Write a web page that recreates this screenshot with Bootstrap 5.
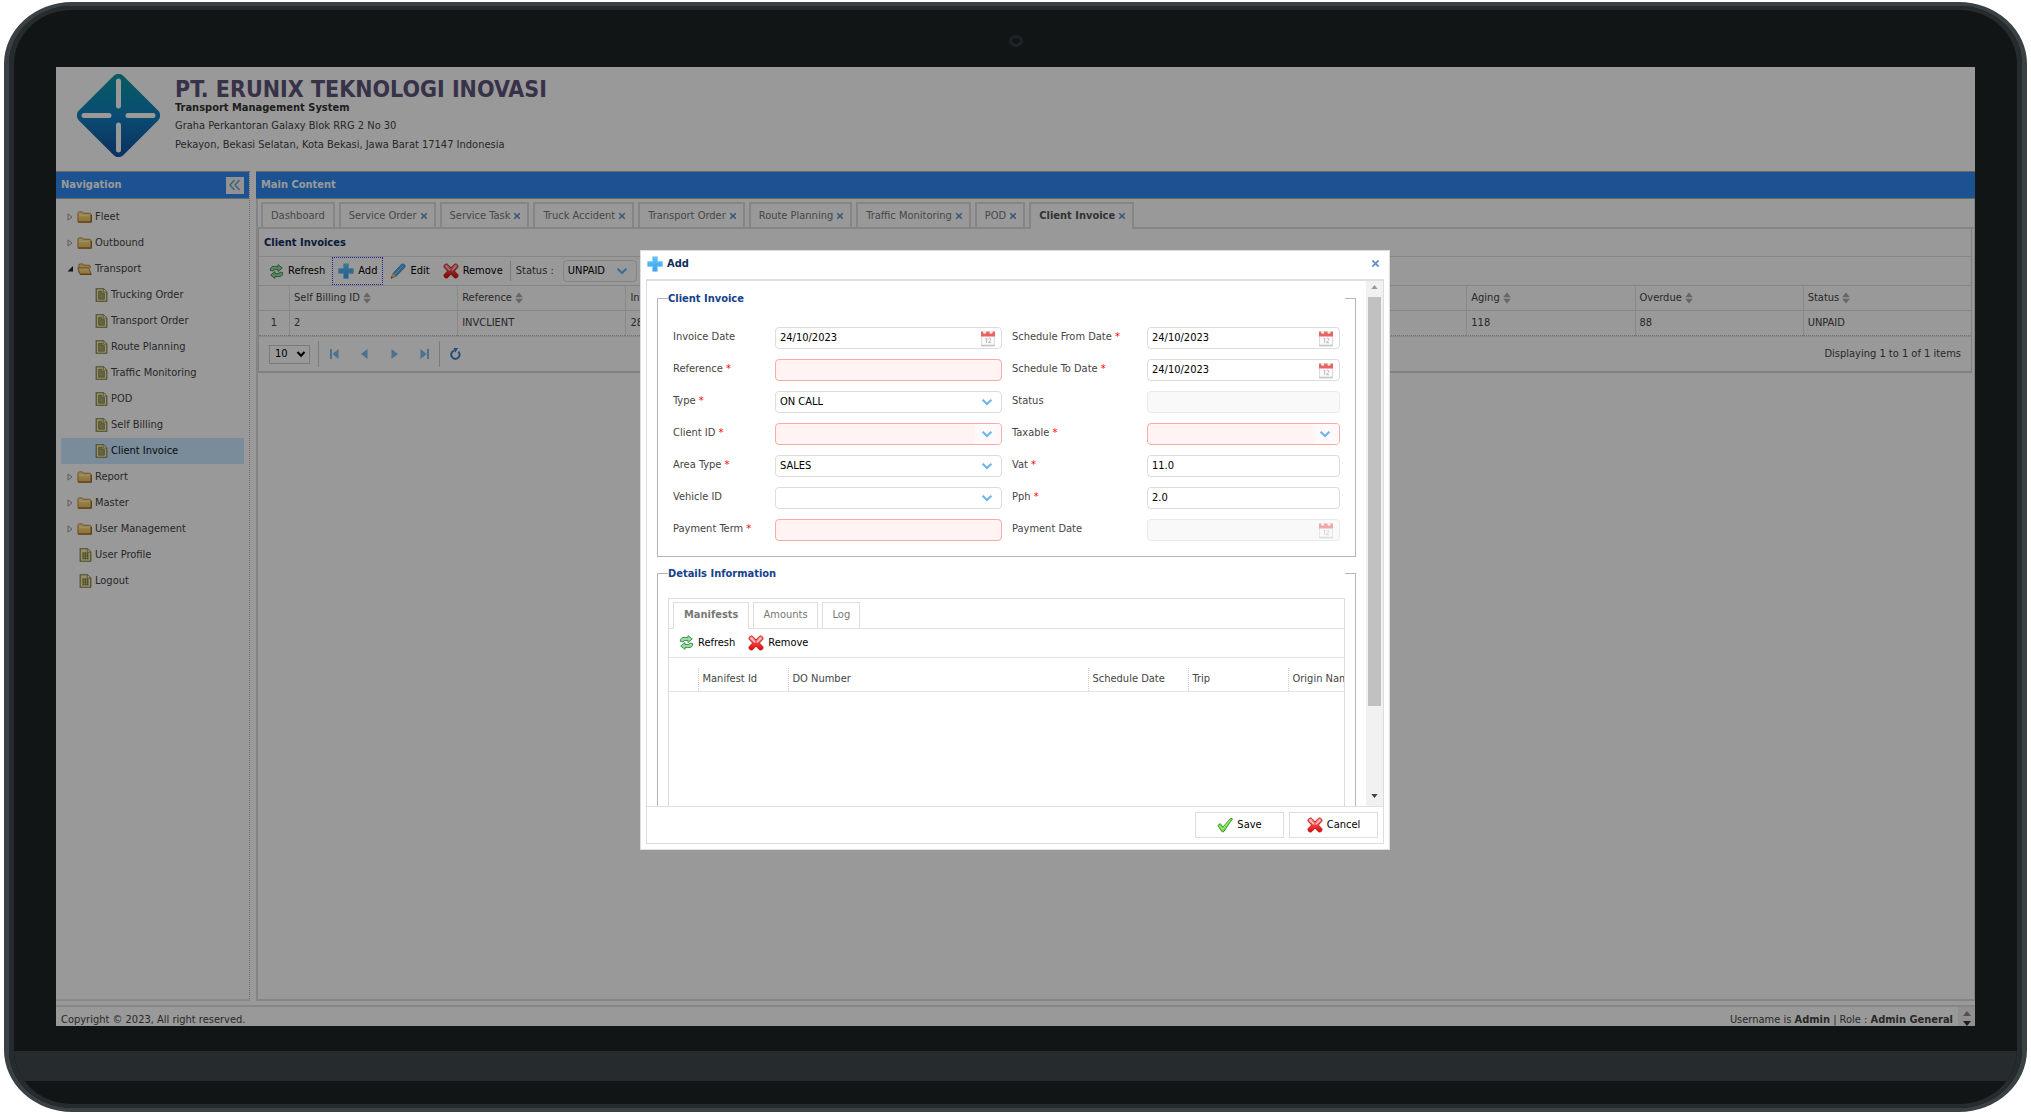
<!DOCTYPE html>
<html lang="en">
<head>
<meta charset="utf-8">
<meta name="viewport" content="width=device-width, initial-scale=1">
<title>Transport Management System</title>
<link href="https://cdn.jsdelivr.net/npm/bootstrap@5.3.0/dist/css/bootstrap.min.css" rel="stylesheet">
<style>
:root{--line:#dcdcdc;--edge:#d8d8d8;--brand:#2f89f0;--ink:#444}
body{background:#fff;min-height:100vh;font-family:"DejaVu Sans Condensed","DejaVu Sans",sans-serif;font-size:11px;line-height:16px;color:var(--ink)}
button,input,select{font:inherit;color:inherit}
svg{display:block;flex:none}
a{color:inherit;text-decoration:none}
/* monitor frame */
.stage{min-height:100vh;padding:2px 4px 6px}
.monitor{background:#111516;border:4px solid #3a4145;border-width:4px 5px;border-radius:68px/62px}
.bezel{border:4px solid #262b2e;border-width:4px 5px;border-radius:63px/58px;overflow:hidden}
.camera-bar{height:57px;padding-top:5px}
.camera{width:14px;height:12px;border:3px solid #1f2426;border-radius:50%}
.chin-gap{height:25px}
.chin{height:30px;background:#262b2e}
.foot-gap{height:23px}
.display{margin:0 42px;background:#fff;overflow:hidden}
/* page header */
.brand-bar{height:104px;padding:7px 21px}
.brand-text{padding:3px 0 0 15px}
.brand-name{font-size:23px;line-height:24px;font-weight:700;color:#5c5478;margin:0}
.brand-sub{font-weight:700;line-height:14px;color:#333;margin-bottom:1px}
.brand-line{line-height:19px;margin:0}
/* panels */
.bar-title{height:28px;background:var(--brand);border:1px solid #b0b0b0;border-width:1px 0;color:#fff;font-weight:700;padding:0 5px}
.side{width:194px;border-right:1px dotted #b8b8b8;border-bottom:2px solid #e4e4e4}
.collapse-btn{width:18px;height:17px;border:0;padding:0;background:#f4f4f4}
.tree{padding:5px}
.tree a{height:26px;gap:3px;color:var(--ink)}
.tree a.lv1{padding-left:6px}
.tree a.leaf1{padding-left:18px}
.tree a.lv2{padding-left:34px}
.tree a.picked{background:#cbe8ff;color:#111}
.content-col{padding-left:6px}
.main{border:2px solid #dcdcdc;border-width:0 1px 2px 2px}
.tab-row{gap:4px;padding:3px 3px 0;border-bottom:2px solid #dedede}
.tab-row .tab{height:25px;border:2px solid #dedede;border-bottom:0;background:#fff;color:#777;padding:0 6px 0 8px;gap:3px}
.tab-row .tab.plain{padding:0 8px}
.tab-row .tab.on{font-weight:700;color:#555;margin-bottom:-2px;height:27px;padding-bottom:2px}
.grid-panel{border:1px solid var(--edge);border-width:0 1px 2px 1px;margin-right:2px}
.panel-head{height:27px;padding:0 5px;font-weight:700;color:#0e2d5f}
.tools{height:29px;border-top:1px solid #e0e0e0;gap:1px}
.tool{border:1px dotted transparent;background:none;padding:0 5px;gap:4px;height:28px;color:#000}
.tool.focus{border-color:#4040ff}
.status-box{width:74px}
.rule{width:1px;background:#ccc;align-self:stretch}
.data{table-layout:fixed;width:100%;border-collapse:separate;border-spacing:0}
.data .num-col{width:30px}
.data th,.data td{height:25px;padding:0 4px;font-weight:400;border-left:1px solid #e4e4e4;white-space:nowrap;overflow:hidden}
.data th:first-child,.data td:first-child{border-left:0;text-align:center;padding:0}
.data thead th{height:26px;border-top:1px solid #dcdcdc;border-bottom:1px solid #dcdcdc}
.data tbody td{border-bottom:1px dotted #bbb}
.th-flex{gap:3px}
.pager{height:35px;border-top:1px solid #e4e4e4;padding:0 10px}
.pager .num{width:41px;height:19px;border:1px solid #ccc;background:#fff;padding:0 5px;color:#000;appearance:none}
.pager button{border:0;background:none;padding:0;width:30px}
.splitter{height:4px}
.page-foot{height:21px;border-top:2px solid #e0e0e0;line-height:12px}
.foot-text{padding:0 5px}
/* fields */
.field{position:relative;height:22px;border:1px solid #dcdcdc;border-radius:4px;background:#fff;overflow:hidden}
.field input,.field select{width:100%;height:20px;border:0;background:none;padding:0 4px;appearance:none;color:#000;outline:0;display:block}
.field svg{position:absolute;right:6px;top:2px;pointer-events:none}
.field.need{background:#fff3f3;border-color:#ffa8a8}
.field.need.drop::after{content:"";position:absolute;right:0;top:0;width:26px;height:20px;background:#fff9f9}
.field.need.drop svg{z-index:1}
.field.off{background:#f9f9f9;border-color:#eaeaea}
.field.off svg{opacity:.55}
/* dialog */
.mask{position:absolute;inset:0;background:rgba(0,0,0,.4);padding:6px 1px 0 0}
.dlg{width:750px;height:600px;background:#fff;border:1px solid #ddd;padding:0 5px 5px}
.dlg-head{height:28px;padding:0 4px 2px 1px;font-weight:700;color:#0e2d5f}
.dlg-body{border:1px solid #dcdcdc;border-top:2px solid #dedede;min-height:0}
.scroller{overflow:hidden;padding:9px 10px 0}
.group{border:1px solid #b3b3c6;padding:0 10px;margin:0 0 8px}
.group legend{float:none;width:100%;margin:0;padding:0;font-size:11px;line-height:17px;font-weight:700;color:#15428b}
.form-grid{display:grid;grid-template-columns:102px 227fr 145px 193fr;row-gap:10px;padding:20px 5px 15px}
.form-grid label{line-height:20px}
.form-grid label.second{padding-left:10px}
.form-grid i{font-style:normal;color:red}
.detail{border:1px solid #dcdcdc;margin-top:16px;height:300px;overflow:hidden}
.detail .tab-row{padding:3px 4px 0;border-bottom:1px solid #e0e0e0}
.detail .tab-row .tab{border-width:1px;height:26px;border-bottom:0;padding:0 9px 0 10px}
.detail .tab-row .tab.on{height:27px;margin-bottom:-1px;padding-bottom:1px;color:#777}
.detail .tools{border-top:0;border-bottom:1px solid #e4e4e4;padding-left:4px}
.lines{table-layout:fixed;width:767px}
.lines thead{border-bottom:1px solid #e4e4e4}
.lines th{height:24px;font-weight:400;padding:0 4px;border-left:1px dotted #ccc}
.lines th:first-child{border-left:0}
.lines .w-no{width:29px}
.lines .w-id{width:90px}
.lines .w-do{width:300px}
.lines .w-std{width:100px}
.lines-wrap{padding-top:10px}
.sbar{width:17px;background:#f1f1f1}
.sbar .grip{height:409px;width:13px;background:#c1c1c1}
.dlg-foot{height:37px;border-top:1px solid #e0e0e0;padding:0 5px;gap:5px}
.act{width:89px;height:26px;border:1px solid #ddd;background:#fff;color:#000;gap:4px;padding:0}
</style>
<script src="https://cdn.jsdelivr.net/npm/bootstrap@5.3.0/dist/js/bootstrap.bundle.min.js"></script>
</head>
<body>
<svg width="0" height="0" class="position-absolute">
<defs>
<linearGradient id="gLogo" x1="0" y1="0" x2="1" y2="1"><stop offset="0" stop-color="#0c9aa0"/><stop offset=".5" stop-color="#127fc0"/><stop offset="1" stop-color="#104f9c"/></linearGradient>
<linearGradient id="gFold" x1="0" y1="0" x2="0" y2="1"><stop offset="0" stop-color="#ffeaa0"/><stop offset="1" stop-color="#f0c050"/></linearGradient>
<linearGradient id="gPlus" x1="0" y1="0" x2="0" y2="1"><stop offset="0" stop-color="#5cc6fb"/><stop offset="1" stop-color="#3f9fe6"/></linearGradient>
<linearGradient id="gRed" x1="0" y1="0" x2="0" y2="1"><stop offset="0" stop-color="#ff9a9a"/><stop offset=".5" stop-color="#f04040"/><stop offset="1" stop-color="#e00808"/></linearGradient>
<symbol id="folder" viewBox="0 0 16 14"><path d="M1 3.2Q1 1.6 2.4 1.6H5.4Q6.4 1.6 6.800 3H13.4Q14.800 3 14.800 4.4V12H1Z" fill="url(#gFold)" stroke="#c08030"/><path d="M2.4 5.2H13.4" stroke="#fff3c4"/><path d="M1 12.6H15.4V4.6" fill="none" stroke="#8a5a20"/></symbol>
<symbol id="folder-open" viewBox="0 0 16 14"><path d="M2 11V2.800Q2 1.6 3.4 1.6H6Q7 1.6 7.4 3H13Q14 3 14 4V6" fill="#f7d47c" stroke="#c08030"/><path d="M.8 5.800H12.4L15.2 12.4H3.2Z" fill="url(#gFold)" stroke="#b97828"/><path d="M3 12.8H15.4" stroke="#8a5a20"/></symbol>
<symbol id="file" viewBox="0 0 13 15"><path d="M.8.8H8.600L12.2 4.2V14.2H.8Z" fill="#f8f3a0" stroke="#7d7a48" stroke-width="1.200"/><path d="M8.400.8V4.4H12.2" fill="#fffce0" stroke="#7d7a48" stroke-width=".8"/><path d="M3.4 3.6H7V6H9.6V12H3.4Z" fill="#aaa678" stroke="#77744c" stroke-width=".7"/></symbol>
<symbol id="sheet" viewBox="0 0 13 15"><path d="M.8.8H8.600L12.2 4.2V14.2H.8Z" fill="#f8f3a0" stroke="#7d7a48" stroke-width="1.200"/><path d="M8.400.8V4.4H12.2" fill="#fffce0" stroke="#7d7a48" stroke-width=".8"/><path d="M3.2 5.5H9.8M3.2 7.5H9.8M3.2 9.5H9.8M3.2 11.5H9.8M4 4.5V12M6.4 4.5V12M8.8 5V12" stroke="#77744c" stroke-width=".9"/></symbol>
<symbol id="tri" viewBox="0 0 7 8"><path d="M1 .9L5 4L1 7.1Z" fill="#fff" stroke="#999"/></symbol>
<symbol id="tri-open" viewBox="0 0 7 8"><path d="M6 1V6.500H.5Z" fill="#222"/></symbol>
<symbol id="refresh" viewBox="0 0 16 16"><g fill="#9adf9a" stroke="#3d8a52" stroke-width="1" stroke-linejoin="round"><path d="M1.400 6.800Q1.200 2 6.600 2.600H9.600V.7L14.200 4.200L9.600 8V5.800H6.400Q4.800 5.800 4.400 7.400Z"/><path d="M14.600 9.200Q14.800 14 9.400 13.400H6.400V15.300L1.800 11.800L6.400 8V10.200H9.600Q11.200 10.200 11.600 8.600Z"/></g></symbol>
<symbol id="plus" viewBox="0 0 16 16"><path d="M5.600.8H10.4V5.600H15.4V10.4H10.4V15.4H5.600V10.4H.6V5.600H5.600Z" fill="url(#gPlus)" stroke="#86cdf5" stroke-width=".8"/></symbol>
<symbol id="pencil" viewBox="0 0 16 16"><path d="M3.2 10.2L11.4 1.4Q13.4.2 14.8 2Q15.6 3.4 14.6 4.600L6.2 13.2Z" fill="#4aa8e8" stroke="#2f7fc0" stroke-width=".7"/><path d="M3.2 10.2L6.2 13.2L1 15.4Z" fill="#f6cf90" stroke="#a87840" stroke-width=".6"/><path d="M4.8 11.4L13 2.8" stroke="#a5dcff"/><path d="M1 15.4L1.6 13.6L2.8 14.6Z" fill="#444"/></symbol>
<symbol id="cross" viewBox="0 0 16 16"><path d="M3 1Q4.2.6 5.200 1.800L8 5L10.8 1.800Q12 .6 13.2 1Q15.6 2 15 4.200L11.4 8L15 11.8Q15.6 14.2 13.2 15Q12 15.4 10.8 14.2L8 11L5.200 14.2Q4.2 15.4 2.8 15Q.4 14.2 1 11.8L4.600 8L1 4.200Q.4 2 3 1Z" fill="url(#gRed)" stroke="#c01818" stroke-width=".9"/><path d="M3.2 3.2L6.8 7M12.8 3.2L9.2 7" stroke="#ffd0d0" stroke-width="1.300" stroke-linecap="round"/></symbol>
<symbol id="check" viewBox="0 0 16 16"><path d="M.8 8.400L3.4 6.600L5.800 10.2L13.4 1.400L15.6 1.800L6.400 15L4.800 14.6Z" fill="#6fe03c" stroke="#2f7d2a" stroke-width=".8" stroke-linejoin="round"/><path d="M2.4 8.600L5.600 12.4L13 3.400" fill="none" stroke="#b8f59a" stroke-width=".8"/></symbol>
<symbol id="cal" viewBox="0 0 14 16"><rect x=".4" y="2" width="13.200" height="13.600" fill="#fafafa" stroke="#d4d4d4" stroke-width=".8"/><rect y="1" width="14" height="5" fill="#e86464"/><circle cx="3.600" cy="1.800" r="1.500" fill="#eee"/><circle cx="10" cy="1.800" r="1.500" fill="#eee"/><path d="M4.4 8.400L5.600 7.600V12.4M7.400 8.400Q8.600 7 9.600 8.200Q10 9.400 7.400 12.200H10" fill="none" stroke="#b4b4b4" stroke-width=".9"/><path d="M.4 14.8H13.6" stroke="#bbb"/></symbol>
<symbol id="chev" viewBox="0 0 16 16"><path d="M3.600 5.800L8 10L12.4 5.800" fill="none" stroke="#6db6ee" stroke-width="2.200"/></symbol>
<symbol id="sort" viewBox="0 0 8 12"><path d="M4 .4L7.800 5.300H.2ZM4 11.600L7.800 6.700H.2Z" fill="#aaa"/></symbol>
<symbol id="x" viewBox="0 0 8 8"><path d="M1.200 1.200L6.800 6.800M6.800 1.200L1.200 6.800" stroke="#5f93c8" stroke-width="1.600"/></symbol>
<symbol id="up" viewBox="0 0 8 5"><path d="M0 5L4 0L8 5Z"/></symbol>
<symbol id="down" viewBox="0 0 8 5"><path d="M0 0L4 5L8 0Z"/></symbol>
</defs>
</svg>
<div class="stage d-flex flex-column">
<div class="monitor d-flex flex-column flex-grow-1">
<div class="bezel d-flex flex-column flex-grow-1">
<div class="camera-bar d-flex justify-content-center align-items-center"><span class="camera"></span></div>

<div class="display position-relative d-flex flex-column flex-grow-1">
<header class="brand-bar d-flex">
<svg width="83" height="83" viewBox="0 0 83 83"><rect x="10" y="10" width="63" height="63" rx="7" transform="rotate(45 41.500 41.500)" fill="url(#gLogo)"/><path d="M41.500 7V32M41.500 51V76M7 41.500H32M51 41.500H76" stroke="#fff" stroke-width="5" stroke-linecap="round"/></svg>
<div class="brand-text">
<h1 class="brand-name">PT. ERUNIX TEKNOLOGI INOVASI</h1>
<div class="brand-sub">Transport Management System</div>
<p class="brand-line">Graha Perkantoran Galaxy Blok RRG 2 No 30</p>
<p class="brand-line">Pekayon, Bekasi Selatan, Kota Bekasi, Jawa Barat 17147 Indonesia</p>
</div>
</header>

<div class="d-flex flex-grow-1">
<aside class="side flex-shrink-0">
<div class="bar-title d-flex align-items-center justify-content-between">Navigation
<button class="collapse-btn d-flex align-items-center justify-content-center" aria-label="Collapse"><svg width="12" height="12" viewBox="0 0 12 12"><path d="M5.500 1L1 6L5.500 11M10.500 1L6 6L10.500 11" fill="none" stroke="#5a9bd4" stroke-width="1.300"/></svg></button></div>
<nav class="tree">
<a href="#" class="lv1 d-flex align-items-center"><svg width="7" height="8"><use href="#tri"/></svg><svg width="15" height="14"><use href="#folder"/></svg>Fleet</a>
<a href="#" class="lv1 d-flex align-items-center"><svg width="7" height="8"><use href="#tri"/></svg><svg width="15" height="14"><use href="#folder"/></svg>Outbound</a>
<a href="#" class="lv1 d-flex align-items-center"><svg width="7" height="8"><use href="#tri-open"/></svg><svg width="15" height="14"><use href="#folder-open"/></svg>Transport</a>
<a href="#" class="lv2 d-flex align-items-center"><svg width="13" height="14"><use href="#file"/></svg>Trucking Order</a>
<a href="#" class="lv2 d-flex align-items-center"><svg width="13" height="14"><use href="#file"/></svg>Transport Order</a>
<a href="#" class="lv2 d-flex align-items-center"><svg width="13" height="14"><use href="#file"/></svg>Route Planning</a>
<a href="#" class="lv2 d-flex align-items-center"><svg width="13" height="14"><use href="#file"/></svg>Traffic Monitoring</a>
<a href="#" class="lv2 d-flex align-items-center"><svg width="13" height="14"><use href="#file"/></svg>POD</a>
<a href="#" class="lv2 d-flex align-items-center"><svg width="13" height="14"><use href="#file"/></svg>Self Billing</a>
<a href="#" class="lv2 picked d-flex align-items-center"><svg width="13" height="14"><use href="#file"/></svg>Client Invoice</a>
<a href="#" class="lv1 d-flex align-items-center"><svg width="7" height="8"><use href="#tri"/></svg><svg width="15" height="14"><use href="#folder"/></svg>Report</a>
<a href="#" class="lv1 d-flex align-items-center"><svg width="7" height="8"><use href="#tri"/></svg><svg width="15" height="14"><use href="#folder"/></svg>Master</a>
<a href="#" class="lv1 d-flex align-items-center"><svg width="7" height="8"><use href="#tri"/></svg><svg width="15" height="14"><use href="#folder"/></svg>User Management</a>
<a href="#" class="leaf1 d-flex align-items-center"><svg width="13" height="14"><use href="#sheet"/></svg>User Profile</a>
<a href="#" class="leaf1 d-flex align-items-center"><svg width="13" height="14"><use href="#sheet"/></svg>Logout</a>
</nav>
</aside>

<section class="content-col flex-grow-1 d-flex flex-column">
<div class="bar-title d-flex align-items-center">Main Content</div>
<div class="main flex-grow-1">
<div class="tab-row d-flex">
<button class="tab plain">Dashboard</button>
<button class="tab d-flex align-items-center">Service Order<svg width="8" height="8"><use href="#x"/></svg></button>
<button class="tab d-flex align-items-center">Service Task<svg width="8" height="8"><use href="#x"/></svg></button>
<button class="tab d-flex align-items-center">Truck Accident<svg width="8" height="8"><use href="#x"/></svg></button>
<button class="tab d-flex align-items-center">Transport Order<svg width="8" height="8"><use href="#x"/></svg></button>
<button class="tab d-flex align-items-center">Route Planning<svg width="8" height="8"><use href="#x"/></svg></button>
<button class="tab d-flex align-items-center">Traffic Monitoring<svg width="8" height="8"><use href="#x"/></svg></button>
<button class="tab d-flex align-items-center">POD<svg width="8" height="8"><use href="#x"/></svg></button>
<button class="tab on d-flex align-items-center">Client Invoice<svg width="8" height="8"><use href="#x"/></svg></button>
</div>
<div class="grid-panel">
<div class="panel-head d-flex align-items-center">Client Invoices</div>
<div class="tools d-flex align-items-center ps-1">
<button class="tool d-flex align-items-center"><svg width="15" height="15"><use href="#refresh"/></svg>Refresh</button>
<button class="tool focus d-flex align-items-center"><svg width="16" height="16"><use href="#plus"/></svg>Add</button>
<button class="tool d-flex align-items-center"><svg width="16" height="16"><use href="#pencil"/></svg>Edit</button>
<button class="tool d-flex align-items-center"><svg width="16" height="16"><use href="#cross"/></svg>Remove</button>
<span class="rule my-1"></span>
<label for="fStatus" class="px-1 me-1">Status :</label>
<div class="field drop status-box"><select id="fStatus"><option>UNPAID</option></select><svg width="16" height="16"><use href="#chev"/></svg></div>
</div>
<table class="data">
<colgroup><col class="num-col"><col span="10"></colgroup>
<thead><tr><th></th>
<th><span class="th-flex d-flex align-items-center">Self Billing ID<svg width="8" height="12"><use href="#sort"/></svg></span></th>
<th><span class="th-flex d-flex align-items-center">Reference<svg width="8" height="12"><use href="#sort"/></svg></span></th>
<th>Invoice</th>
<th></th><th></th><th></th><th></th>
<th><span class="th-flex d-flex align-items-center">Aging<svg width="8" height="12"><use href="#sort"/></svg></span></th>
<th><span class="th-flex d-flex align-items-center">Overdue<svg width="8" height="12"><use href="#sort"/></svg></span></th>
<th><span class="th-flex d-flex align-items-center">Status<svg width="8" height="12"><use href="#sort"/></svg></span></th></tr></thead>
<tbody><tr><td>1</td><td>2</td><td>INVCLIENT</td><td>28/06</td><td></td><td></td><td></td><td></td><td>118</td><td>88</td><td>UNPAID</td></tr></tbody>
</table>
<div class="pager d-flex align-items-center">
<div class="position-relative"><select class="num" aria-label="Page size"><option>10</option></select><svg class="position-absolute top-50 end-0 translate-middle-y me-1" width="10" height="10" viewBox="0 0 10 10"><path d="M1.500 3L5 6.800L8.500 3" fill="none" stroke="#000" stroke-width="2"/></svg></div>
<span class="rule my-1 ms-2"></span>
<button class="d-flex justify-content-center" aria-label="First"><svg width="9" height="10" viewBox="0 0 9 10"><path d="M0 0H2V10H0ZM8.500 0V10L2.500 5Z" fill="#7fbdf2"/></svg></button>
<button class="d-flex justify-content-center" aria-label="Previous"><svg width="7" height="10" viewBox="0 0 7 10"><path d="M6.500 0V10L0 5Z" fill="#7fbdf2"/></svg></button>
<button class="d-flex justify-content-center" aria-label="Next"><svg width="7" height="10" viewBox="0 0 7 10"><path d="M.5 0V10L7 5Z" fill="#7fbdf2"/></svg></button>
<button class="d-flex justify-content-center" aria-label="Last"><svg width="9" height="10" viewBox="0 0 9 10"><path d="M.5 0V10L6.500 5ZM7 0H9V10H7Z" fill="#7fbdf2"/></svg></button>
<span class="rule my-1"></span>
<button class="d-flex justify-content-center" aria-label="Reload"><svg width="11" height="12" viewBox="0 0 11 12"><path d="M4 2.700A4.200 4.200 0 1 0 8.400 3.700" fill="none" stroke="#2f7fc8" stroke-width="1.900"/><path d="M3.600 0H8.200L5 4.800Z" fill="#2f7fc8"/></svg></button>
<span class="ms-auto">Displaying 1 to 1 of 1 items</span>
</div>
</div>
</div>
</section>
</div>
<div class="splitter"></div>
<footer class="page-foot d-flex">
<div class="foot-text flex-grow-1 d-flex justify-content-between align-items-end"><span>Copyright © 2023, All right reserved.</span><span>Username is <b>Admin</b> | Role : <b>Admin General</b></span></div>
<div class="sbar d-flex flex-column align-items-center justify-content-between"><svg class="mt-1" width="8" height="5" fill="#888"><use href="#up"/></svg><svg width="8" height="5" fill="#333"><use href="#down"/></svg></div>
</footer>

<div class="mask d-flex justify-content-center align-items-center">
<div class="dlg d-flex flex-column" role="dialog" aria-label="Add">
<div class="dlg-head d-flex align-items-center flex-shrink-0"><svg width="16" height="16"><use href="#plus"/></svg><span class="ps-1 me-auto">Add</span><button class="border-0 bg-transparent p-0" aria-label="Close"><svg width="9" height="9"><use href="#x"/></svg></button></div>
<div class="dlg-body flex-grow-1 d-flex flex-column">
<div class="d-flex flex-grow-1 overflow-hidden">
<div class="scroller flex-grow-1">
<fieldset class="group"><legend>Client Invoice</legend>
<div class="form-grid">
<label for="a1">Invoice Date</label><div class="field"><input id="a1" value="24/10/2023"><svg width="14" height="17"><use href="#cal"/></svg></div>
<label for="b1" class="second">Schedule From Date <i>*</i></label><div class="field"><input id="b1" value="24/10/2023"><svg width="14" height="17"><use href="#cal"/></svg></div>
<label for="a2">Reference <i>*</i></label><div class="field need"><input id="a2"></div>
<label for="b2" class="second">Schedule To Date <i>*</i></label><div class="field"><input id="b2" value="24/10/2023"><svg width="14" height="17"><use href="#cal"/></svg></div>
<label for="a3">Type <i>*</i></label><div class="field drop"><select id="a3"><option>ON CALL</option></select><svg width="16" height="16"><use href="#chev"/></svg></div>
<label for="b3" class="second">Status</label><div class="field off"><input id="b3" disabled></div>
<label for="a4">Client ID <i>*</i></label><div class="field need drop"><select id="a4"><option></option></select><svg width="16" height="16"><use href="#chev"/></svg></div>
<label for="b4" class="second">Taxable <i>*</i></label><div class="field need drop"><select id="b4"><option></option></select><svg width="16" height="16"><use href="#chev"/></svg></div>
<label for="a5">Area Type <i>*</i></label><div class="field drop"><select id="a5"><option>SALES</option></select><svg width="16" height="16"><use href="#chev"/></svg></div>
<label for="b5" class="second">Vat <i>*</i></label><div class="field"><input id="b5" value="11.0"></div>
<label for="a6">Vehicle ID</label><div class="field drop"><select id="a6"><option></option></select><svg width="16" height="16"><use href="#chev"/></svg></div>
<label for="b6" class="second">Pph <i>*</i></label><div class="field"><input id="b6" value="2.0"></div>
<label for="a7">Payment Term <i>*</i></label><div class="field need"><input id="a7"></div>
<label for="b7" class="second">Payment Date</label><div class="field off"><input id="b7" disabled><svg width="14" height="17"><use href="#cal"/></svg></div>
</div>
</fieldset>
<fieldset class="group"><legend>Details Information</legend>
<div class="detail">
<div class="tab-row d-flex"><button class="tab on">Manifests</button><button class="tab">Amounts</button><button class="tab">Log</button></div>
<div class="tools d-flex align-items-center"><button class="tool d-flex align-items-center"><svg width="15" height="15"><use href="#refresh"/></svg>Refresh</button><button class="tool d-flex align-items-center"><svg width="16" height="16"><use href="#cross"/></svg>Remove</button></div>
<div class="lines-wrap">
<table class="lines"><colgroup><col class="w-no"><col class="w-id"><col class="w-do"><col class="w-std"><col class="w-std"><col></colgroup>
<thead><tr><th></th><th>Manifest Id</th><th>DO Number</th><th>Schedule Date</th><th>Trip</th><th>Origin Name</th></tr></thead></table>
</div>
</div>
</fieldset>
</div>
<div class="sbar flex-shrink-0 d-flex flex-column align-items-center"><svg class="mt-1 mb-2" width="7" height="4" fill="#999"><use href="#up"/></svg><span class="grip"></span><svg class="mt-auto mb-2" width="7" height="4" fill="#444"><use href="#down"/></svg></div>
</div>
<div class="dlg-foot flex-shrink-0 d-flex justify-content-end align-items-center">
<button class="act d-flex align-items-center justify-content-center"><svg width="16" height="16"><use href="#check"/></svg>Save</button>
<button class="act d-flex align-items-center justify-content-center"><svg width="16" height="16"><use href="#cross"/></svg>Cancel</button>
</div>
</div>
</div>
</div>
</div>

<div class="chin-gap"></div>
<div class="chin"></div>
<div class="foot-gap"></div>
</div>
</div>
</div>
</body>
</html>
